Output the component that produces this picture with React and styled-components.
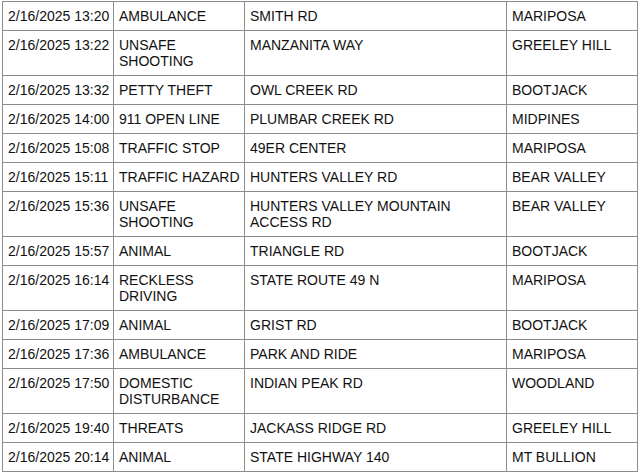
import React from "react";
import styled, { createGlobalStyle } from "styled-components";

const GlobalStyle = createGlobalStyle`
  html, body {
    margin: 0;
    padding: 0;
    background: #ffffff;
  }
  body {
    font-family: "Liberation Sans", Arial, sans-serif;
    color: #111111;
  }
`;

const Page = styled.div`
  padding: 1px 0 0 2px;
`;

const Table = styled.table`
  border-collapse: collapse;
  table-layout: fixed;
  width: 636px;
  font-size: 14px;
  line-height: 16px;
`;

const Cell = styled.td`
  border: 1px solid #8c8c8c;
  padding: 6px 2px 6px 5px;
  vertical-align: top;
  text-align: left;
  white-space: ${(p) => (p.$nowrap ? "nowrap" : "normal")};
  overflow: hidden;
`;

const calls = [
  ["2/16/2025 13:20", "AMBULANCE", "SMITH RD", "MARIPOSA"],
  ["2/16/2025 13:22", "UNSAFE SHOOTING", "MANZANITA WAY", "GREELEY HILL"],
  ["2/16/2025 13:32", "PETTY THEFT", "OWL CREEK RD", "BOOTJACK"],
  ["2/16/2025 14:00", "911 OPEN LINE", "PLUMBAR CREEK RD", "MIDPINES"],
  ["2/16/2025 15:08", "TRAFFIC STOP", "49ER CENTER", "MARIPOSA"],
  ["2/16/2025 15:11", "TRAFFIC HAZARD", "HUNTERS VALLEY RD", "BEAR VALLEY"],
  ["2/16/2025 15:36", "UNSAFE SHOOTING", "HUNTERS VALLEY MOUNTAIN ACCESS RD", "BEAR VALLEY"],
  ["2/16/2025 15:57", "ANIMAL", "TRIANGLE RD", "BOOTJACK"],
  ["2/16/2025 16:14", "RECKLESS DRIVING", "STATE ROUTE 49 N", "MARIPOSA"],
  ["2/16/2025 17:09", "ANIMAL", "GRIST RD", "BOOTJACK"],
  ["2/16/2025 17:36", "AMBULANCE", "PARK AND RIDE", "MARIPOSA"],
  ["2/16/2025 17:50", "DOMESTIC DISTURBANCE", "INDIAN PEAK RD", "WOODLAND"],
  ["2/16/2025 19:40", "THREATS", "JACKASS RIDGE RD", "GREELEY HILL"],
  ["2/16/2025 20:14", "ANIMAL", "STATE HIGHWAY 140", "MT BULLION"],
];

const widths = [111, 131, 262, 131];

export default function App() {
  return (
    <>
      <GlobalStyle />
      <Page>
        <Table>
          <colgroup>
            {widths.map((w, i) => (
              <col key={i} style={{ width: w }} />
            ))}
          </colgroup>
          <tbody>
            {calls.map((row, r) => (
              <tr key={r}>
                {row.map((text, c) => (
                  <Cell key={c} $nowrap={c === 0}>
                    {text}
                  </Cell>
                ))}
              </tr>
            ))}
          </tbody>
        </Table>
      </Page>
    </>
  );
}
